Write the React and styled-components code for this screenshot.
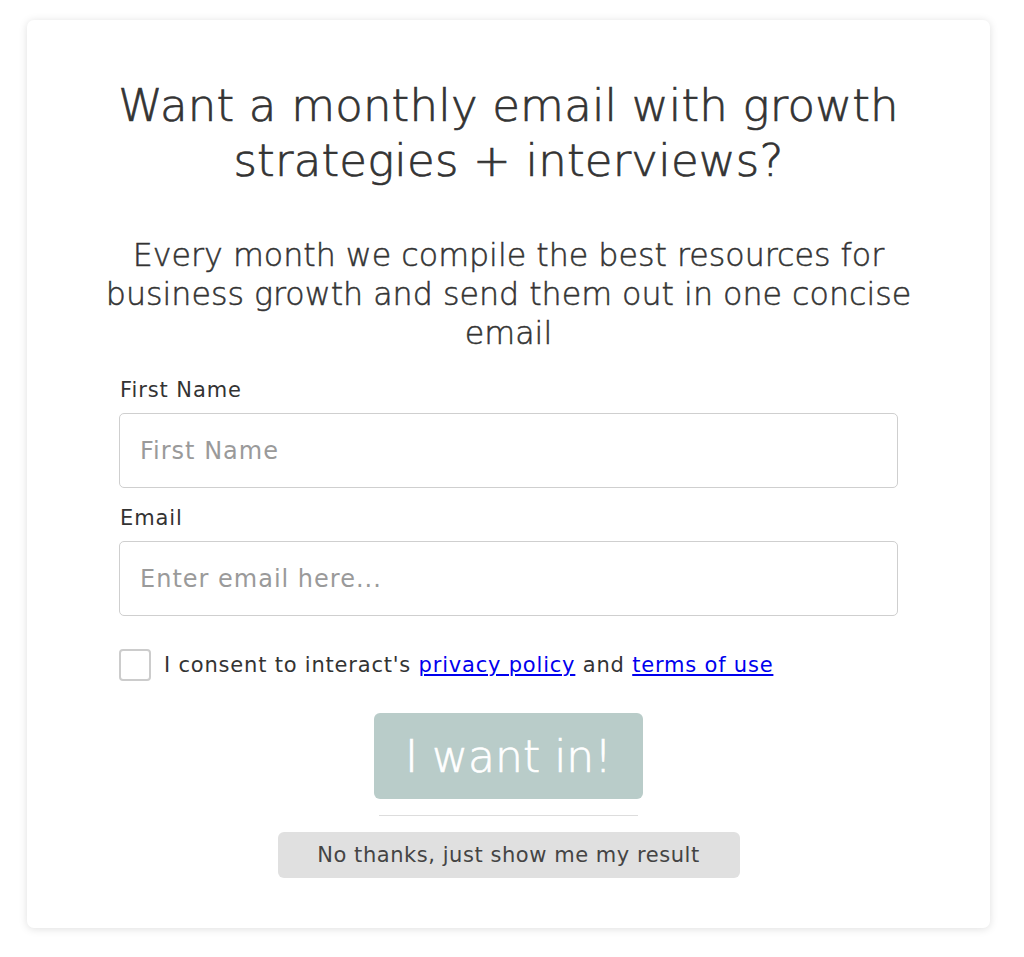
import React from "react";
import styled, { createGlobalStyle } from "styled-components";

const GlobalStyle = createGlobalStyle`
  html, body { margin: 0; padding: 0; background: #ffffff; }
  body { font-family: "DejaVu Sans", sans-serif; color: #333333; }
  * { box-sizing: border-box; }
`;

const Page = styled.div`
  padding: 20px 34px 29px 27px;
`;

const Card = styled.div`
  width: 963px;
  height: 908px;
  background: #ffffff;
  border-radius: 7px;
  box-shadow: 0 1px 9px rgba(0, 0, 0, 0.13);
  padding: 58px 92px 48px;
  display: flex;
  flex-direction: column;
  align-items: center;
`;

const Title = styled.h1`
  margin: 0;
  font-family: "DejaVu Sans", sans-serif;
  font-weight: 200;
  font-size: 45px;
  line-height: 55px;
  letter-spacing: 0.2px;
  color: #333333;
  text-align: center;
  white-space: nowrap;
  -webkit-text-stroke: 0.7px #333333;
`;

const Subtitle = styled.p`
  margin: 48px 0 0;
  font-weight: 200;
  font-size: 31.7px;
  line-height: 39px;
  color: #333333;
  text-align: center;
  white-space: nowrap;
  -webkit-text-stroke: 0.5px #333333;
`;

const Form = styled.form`
  width: 779px;
  margin-top: 25px;
  display: flex;
  flex-direction: column;
`;

const Field = styled.div`
  display: flex;
  flex-direction: column;
  gap: 11px;
  & + & {
    margin-top: 18px;
  }
`;

const Label = styled.label`
  font-size: 21px;
  line-height: 24px;
  letter-spacing: 0.9px;
  color: #333333;
  padding-left: 1px;
`;

const Input = styled.input`
  width: 100%;
  height: 75px;
  border: 1.5px solid #cfcfcf;
  border-radius: 5px;
  padding: 0 20px;
  font-family: "DejaVu Sans", sans-serif;
  font-size: 24px;
  letter-spacing: 1px;
  color: #333333;
  background: #ffffff;
  outline: none;
  &::placeholder {
    color: #9a9a9a;
  }
`;

const Consent = styled.div`
  display: flex;
  align-items: center;
  gap: 13px;
  margin-top: 33px;
`;

const Box = styled.span`
  width: 32px;
  height: 32px;
  flex: none;
  border: 2px solid #cccccc;
  border-radius: 4px;
  background: #ffffff;
`;

const ConsentText = styled.span`
  font-size: 21px;
  line-height: 24px;
  letter-spacing: 0.8px;
  color: #333333;
`;

const Link = styled.a`
  color: #0000ee;
  text-decoration: underline;
`;

const Actions = styled.div`
  display: flex;
  flex-direction: column;
  align-items: center;
  margin-top: 32px;
`;

const Primary = styled.button`
  width: 269px;
  height: 86px;
  border: none;
  border-radius: 6px;
  background: #b9ccc9;
  color: #ffffff;
  font-family: "DejaVu Sans", sans-serif;
  font-weight: 200;
  font-size: 44px;
  -webkit-text-stroke: 0.7px #ffffff;
  cursor: pointer;
`;

const Divider = styled.hr`
  width: 259px;
  margin: 16px 0 0;
  border: none;
  border-top: 1.5px solid #dddddd;
`;

const Secondary = styled.button`
  margin-top: 16px;
  width: 462px;
  height: 46px;
  border: none;
  border-radius: 6px;
  background: #e0e0e0;
  color: #444444;
  font-family: "DejaVu Sans", sans-serif;
  font-size: 21px;
  letter-spacing: 0.55px;
  cursor: pointer;
`;

export default function App() {
  return (
    <>
      <GlobalStyle />
      <Page>
        <Card>
          <Title>
            Want a monthly email with growth
            <br />
            strategies + interviews?
          </Title>
          <Subtitle>
            Every month we compile the best resources for
            <br />
            business growth and send them out in one concise
            <br />
            email
          </Subtitle>
          <Form onSubmit={(e) => e.preventDefault()}>
            <Field>
              <Label htmlFor="fname">First Name</Label>
              <Input id="fname" type="text" placeholder="First Name" />
            </Field>
            <Field>
              <Label htmlFor="email">Email</Label>
              <Input id="email" type="email" placeholder="Enter email here..." />
            </Field>
            <Consent>
              <Box />
              <ConsentText>
                I consent to interact's <Link href="#">privacy policy</Link> and{" "}
                <Link href="#">terms of use</Link>
              </ConsentText>
            </Consent>
            <Actions>
              <Primary type="submit">I want in!</Primary>
              <Divider />
              <Secondary type="button">No thanks, just show me my result</Secondary>
            </Actions>
          </Form>
        </Card>
      </Page>
    </>
  );
}
